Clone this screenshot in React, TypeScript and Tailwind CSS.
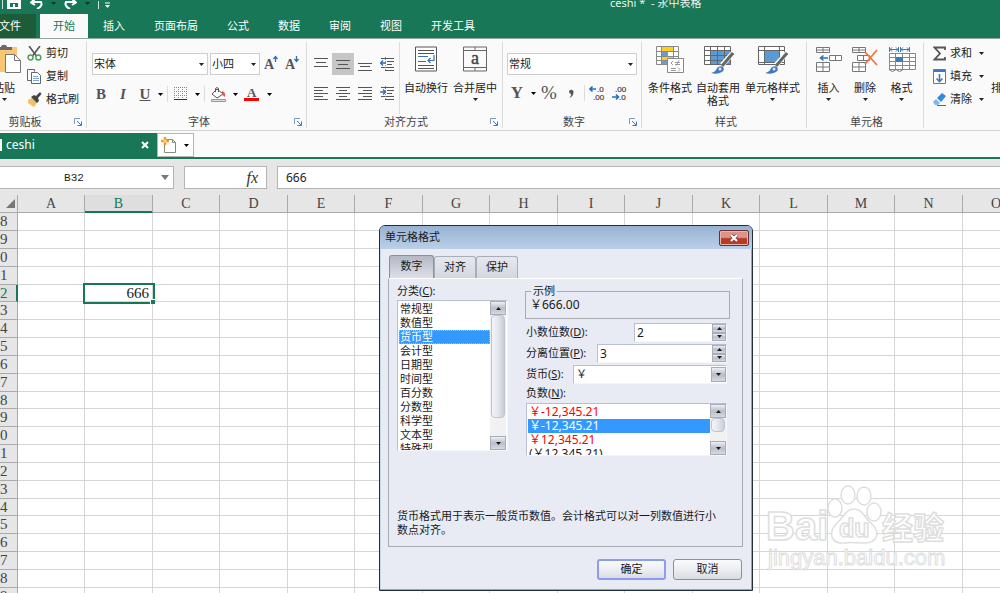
import React from 'react';
import clsx from 'clsx';

const uiFont = 'font-["Noto_Sans","Noto_Sans_CJK_SC",sans-serif]';
const serifFont = 'font-["Liberation_Serif","Noto_Sans_CJK_SC",serif]';

const menuTabs = ['插入', '页面布局', '公式', '数据', '审阅', '视图', '开发工具'];
const columns = ['A', 'B', 'C', 'D', 'E', 'F', 'G', 'H', 'I', 'J', 'K', 'L', 'M', 'N', 'O'];
const rows = Array.from({ length: 22 }, (_, i) => 28 + i);
const categories = [
  '常规型', '数值型', '货币型', '会计型', '日期型', '时间型', '百分数', '分数型', '科学型', '文本型', '特殊型',
];
const negatives = [
  { text: '￥-12,345.21', red: true },
  { text: '￥-12,345.21', red: true },
  { text: '￥12,345.21', red: true },
  { text: '(￥12,345.21)', red: false },
];

interface IconProps {
  w: number;
  h: number;
  children: React.ReactNode;
  className?: string;
}

const Icon: React.FC<IconProps> = ({ w, h, children, className }) => (
  <svg width={w} height={h} viewBox={`0 0 ${w} ${h}`} fill="none" aria-hidden="true" className={clsx('shrink-0', className)}>
    {children}
  </svg>
);

const Caret: React.FC<{ className?: string }> = ({ className }) => (
  <Icon w={5} h={3} className={className}>
    <path d="M0 0h5L2.500 3z" fill="currentColor" />
  </Icon>
);

const UpCaret = () => (
  <Icon w={5} h={3}>
    <path d="M0 3h5L2.500 0z" fill="currentColor" />
  </Icon>
);

/* ---------- ribbon icons ---------- */

const PasteIcon = () => (
  <Icon w={34} h={30}>
    <path d="M2 3h28v25H2z" fill="#f7c873" />
    <path d="M9 5V3h5c0-3 6-3 6 0h5v3H9z" fill="#6b6b6b" />
    <path d="M18.500 10.500h9l6 6v12h-15z" fill="#fff" stroke="#777" />
    <path d="M27.500 10.500v6h6" stroke="#777" />
  </Icon>
);

const CutIcon = () => (
  <Icon w={15} h={15}>
    <path d="M2 0l7.500 10M13 0L5.500 10" stroke="#555" strokeWidth="1.600" />
    <circle cx="3.500" cy="11.500" r="2.500" stroke="#4f9d56" strokeWidth="1.400" />
    <circle cx="11.300" cy="11.500" r="2.500" stroke="#4f9d56" strokeWidth="1.400" />
  </Icon>
);

const CopyIcon = () => (
  <Icon w={15} h={15}>
    <path d="M4 11.500H.500v-11h7v2" stroke="#666" />
    <path d="M4.500 3.500h6l3 3v8h-9z" fill="#fff" stroke="#666" />
    <path d="M6 7.500h5M6 9.500h6M6 11.500h6" stroke="#7aa5d8" />
  </Icon>
);

const BrushIcon = () => (
  <Icon w={15} h={15}>
    <path d="M1 8l4-2 5 5-3 4-6-4z" fill="#f5c062" />
    <path d="M4 5l3-2 2 1 4-4 1.500 2-3.500 4 1 3-2 2z" fill="#444" />
  </Icon>
);

const FontSizeIcon: React.FC<{ up?: boolean }> = ({ up }) => (
  <Icon w={15} h={18}>
    <text x="0" y="14" fontSize="14" fontWeight="bold" fill="#555" fontFamily="Liberation Serif">A</text>
    {up ? (
      <path d="M11.500 7V2M9.500 4l2-2.500 2 2.500" stroke="#2f6fb5" strokeWidth="1.300" />
    ) : (
      <path d="M11.500 1v5M9.500 4l2 2.500 2-2.500" stroke="#2f6fb5" strokeWidth="1.300" />
    )}
  </Icon>
);

const BorderIcon = () => (
  <Icon w={14} h={14}>
    <path d="M.500 0v12M4.500 0v12M8.500 0v12M12.500 0v12M0 .500h13M0 4.500h13M0 8.500h13" stroke="#888" strokeDasharray="1 1" />
    <path d="M0 12.500h13" stroke="#333" />
  </Icon>
);

const FillColorIcon = () => (
  <Icon w={16} h={15}>
    <path d="M6 2l6 5-6 4-5-4z" fill="#fff" stroke="#555" />
    <path d="M4.500 5V1.500q1.500-2 3 0V5" stroke="#555" />
    <path d="M11 4q4 1 3 6-2-1-3-3z" fill="#e05a5a" />
    <path d="M.500 12.500h14v2H.500z" fill="#ddd" stroke="#999" />
  </Icon>
);

const FontColorIcon = () => (
  <Icon w={16} h={16}>
    <text x="3" y="11" fontSize="13" fontWeight="bold" fill="#555" fontFamily="Liberation Serif">A</text>
    <path d="M0 12h15v3H0z" fill="#f00" />
  </Icon>
);

const LinesIcon: React.FC<{ d: string }> = ({ d }) => (
  <Icon w={14} h={14}>
    <path d={d} stroke="#555" />
  </Icon>
);

const IndentIcon: React.FC<{ out?: boolean }> = ({ out }) => (
  <Icon w={15} h={14}>
    <path d="M1 1.500h13M7 4.500h7M7 7.500h5M1 10.500h13M5 13.500h9" stroke="#555" />
    <path d="M5.500 0v14" stroke="#888" strokeDasharray="1 1" />
    <path d={out ? 'M6 6H1M3 3.500L.500 6 3 8.500' : 'M0 6h5M3 3.500L5.500 6 3 8.500'} stroke="#2f6fb5" strokeWidth="1.300" />
  </Icon>
);

const WrapIcon = () => (
  <Icon w={24} h={26}>
    <path d="M1.500 1h21v24h-21z" fill="#fff" stroke="#555" />
    <path d="M4 4.500h16M4 7.500h16M4 19.500h16M4 22.500h16" stroke="#555" />
    <path d="M4 10.500h10M4 15.500h8M20 9v5.500h-6M16.500 12L14 14.500l2.500 2.500" stroke="#3b6fb0" strokeWidth="1.200" />
  </Icon>
);

const MergeIcon = () => (
  <Icon w={26} h={26}>
    <path d="M1.500 1h23v24h-23zM1 4.500h24M1 21.500h24M13 1v3.500M13 21.500V25" stroke="#666" />
    <text x="13" y="18" textAnchor="middle" fontSize="18" fill="#444" stroke="#444" strokeWidth="0.400" fontFamily="Liberation Serif">a</text>
  </Icon>
);

const CondIcon = () => (
  <Icon w={30} h={29}>
    <path d="M1.500 1.500h22v18h-22z" fill="#fff" />
    <path d="M7 2h11v4H7zM7 12h11v4H7z" fill="#ffcf1a" />
    <path d="M7 7h6v4H7zM7 16h5v4H7z" fill="#6b9bd2" />
    <path d="M1.500 1.500h22v18h-22zM1 6.500h22M1 11.500h22M1 15.500h22M6.500 1v19M18.500 1v19" stroke="#888" />
    <path d="M12.500 13.500h16v14h-16z" fill="#fff" stroke="#888" />
    <path d="M18 16l-2 2 2 2M20 17.500h5M20 19.500h5M24 15.500l-3 5M16 23.500h5M16 25.500h5M23 22.500l2 2-2 2" stroke="#999" />
  </Icon>
);

const TableBrush: React.FC<{ single?: boolean }> = ({ single }) => (
  <Icon w={31} h={29}>
    <path d="M1.500 1.500h26v18h-26z" fill="#fff" />
    {single ? (
      <>
        <path d="M8 6h14v11H8z" fill="#5b9bd5" />
        <path d="M1.500 1.500h26v18h-26zM1 5.500h26M7.500 1v19M22.500 1v19M1 17.500h26" stroke="#666" />
      </>
    ) : (
      <>
        <path d="M8 6h20v14H8z" fill="#5b9bd5" />
        <path d="M1.500 1.500h26v18h-26zM1 5.500h26M1 10.500h26M1 15.500h26M7.500 1v19M14.500 1v19M21.500 1v19" stroke="#666" />
      </>
    )}
    <path d="M30 8L19 20" stroke="#fff" strokeWidth="5" />
    <path d="M30 8L19 21" stroke="#666" strokeWidth="3" />
    <path d="M8 28q5-1 6-5 3-3 6-1 2 3-1 5-5 3-11 1z" fill="#3f78bd" />
    <circle cx="17" cy="24" r="1.500" fill="#dce9f7" />
  </Icon>
);

const InsertIcon = () => (
  <Icon w={28} h={27}>
    <path d="M1.500 1.500h13v5h-13zM1 4h13M8 1.500v5M1.500 16.500h13v9h-13zM1 21h13M8 16.500v9" stroke="#777" fill="#fff" />
    <path d="M14.500 9.500h12v5h-12zM20.500 9.500v5" stroke="#777" fill="#fff" />
    <path d="M13 12H6M8.500 9.500L5.500 12l3 2.500" stroke="#2f6fb5" strokeWidth="1.500" />
  </Icon>
);

const DeleteIcon = () => (
  <Icon w={28} h={27}>
    <path d="M1.500 1.500h13v5h-13zM1 4h13M8 1.500v5M1.500 16.500h13v9h-13zM1 21h13M8 16.500v9M6.500 9.500h12v5h-12zM12.500 9.500v5" stroke="#777" fill="#fff" />
    <path d="M14 6l12 13M26 4L14 18" stroke="#f2703f" strokeWidth="1.800" />
  </Icon>
);

const FormatIcon = () => (
  <Icon w={28} h={27}>
    <path d="M1.500 7.500h26v16h-26zM1 11.500h26M1 15.500h26M1 19.500h26M7.500 7.500v16M14.500 7.500v16M21.500 7.500v16" stroke="#888" fill="#fff" />
    <path d="M8 11h7v5H8z" fill="#3f78bd" />
    <path d="M1.500 1v5M10.500 1v5M2 3.500h8M4 1.500l-2 2 2 2M8 1.500l2 2-2 2M12.500 1v5M21.500 1v5M13 3.500h8M15 1.500l-2 2 2 2M19 1.500l2 2-2 2" stroke="#3f78bd" />
    <path d="M1.500 24q3 3 6 0M8.500 24q3 3 6 0" stroke="#777" />
  </Icon>
);

const SumIcon = () => (
  <Icon w={13} h={15}>
    <path d="M12 4V1.500H1.500L7 7.500l-5.500 6H12V11" stroke="#555" strokeWidth="1.800" />
  </Icon>
);

const FillIcon = () => (
  <Icon w={13} h={15}>
    <path d="M.500 .500h12v14H.500z" fill="#fff" stroke="#777" />
    <path d="M1 1h11v2H1z" fill="#3f78bd" />
    <path d="M6.500 5v7M3.500 9.500l3 3 3-3" stroke="#3f78bd" strokeWidth="1.600" />
  </Icon>
);

const EraseIcon = () => (
  <Icon w={13} h={15}>
    <path d="M9 1l4 3-5 6-4-4z" fill="#2f8be0" />
    <path d="M3 7l4 4-2 2H2L0 10z" fill="#7db9f0" />
    <path d="M4 13.500h9" stroke="#666" />
  </Icon>
);

const DecimalIcon: React.FC<{ less?: boolean }> = ({ less }) => (
  <Icon w={16} h={16}>
    <text x={less ? 4 : 8} y="7" fontSize="8" fill="#444" stroke="#444" strokeWidth="0.200" fontFamily="Liberation Sans">{less ? '.00' : '.0'}</text>
    <text x={less ? 8 : 4} y="15" fontSize="8" fill="#444" stroke="#444" strokeWidth="0.200" fontFamily="Liberation Sans">{less ? '.0' : '.00'}</text>
    <path d={less ? 'M1 12h6M5 9.500L7.500 12 5 14.500' : 'M1 4h6M3.500 1.500L1 4l2.500 2.500'} stroke="#1a73c0" strokeWidth="1.600" />
  </Icon>
);

/* ---------- ribbon pieces ---------- */

interface GroupProps {
  label: string;
  launcher?: boolean;
  className: string;
  children: React.ReactNode;
}

const Group: React.FC<GroupProps> = ({ label, launcher, className, children }) => (
  <section aria-label={label} className={clsx('flex shrink-0 flex-col border-r border-[#dcdcdc]', className)}>
    <div className="flex h-[72px]">{children}</div>
    <div className="grid h-[14px] grid-cols-[16px_1fr_16px] items-center text-center text-[#444]">
      <span />
      <span>{label}</span>
      {launcher && (
        <button type="button" aria-label={`${label}设置`} className="pl-1">
          <Icon w={8} h={8}>
            <path d="M.500 6V.500H6" stroke="#7a9cc4" />
            <path d="M3 3l4 4M7.500 3.500v4h-4" stroke="#3f78bd" />
          </Icon>
        </button>
      )}
    </div>
  </section>
);

interface BigButtonProps {
  label: string;
  caret?: boolean;
  className: string;
  children: React.ReactNode;
}

const BigButton: React.FC<BigButtonProps> = ({ label, caret, className, children }) => (
  <button type="button" className={clsx('flex shrink-0 flex-col items-center pt-[2px]', className)}>
    <span className="flex h-[30px] items-center">{children}</span>
    <span className="mt-[7px] leading-[13px]">{label}</span>
    {caret && <Caret className="mt-1" />}
  </button>
);

const SmallButton: React.FC<{ label: string; caret?: boolean; children: React.ReactNode }> = ({ label, caret, children }) => (
  <button type="button" className="flex h-[23px] items-center gap-1">
    {children}
    <span>{label}</span>
    {caret && <Caret className="ml-[3px]" />}
  </button>
);

const Combo: React.FC<{ label: string; value: string; className: string }> = ({ label, value, className }) => (
  <div className={clsx('relative border border-[#cfcfcf] bg-white', className)}>
    <select aria-label={label} className="h-5 w-full appearance-none pl-px text-[11px] leading-5 outline-none">
      <option>{value}</option>
    </select>
    <Caret className="pointer-events-none absolute top-[9px] right-[3px]" />
  </div>
);

const toolButton = 'flex h-[22px] w-[22px] items-center justify-center';

const Ribbon = () => (
  <div className="flex overflow-hidden border-t border-b border-t-[#8fa89b] border-b-[#d2d2d2] bg-[#fafafa] pt-[3px] pb-[2px] text-[11px] text-[#222]">
    <Group label="剪贴板" launcher className="-ml-[36px] w-[123px]">
      <BigButton label="粘贴" caret className="ml-[20px] w-[40px]">
        <PasteIcon />
      </BigButton>
      <div className="ml-[3px] flex flex-col">
        <SmallButton label="剪切"><CutIcon /></SmallButton>
        <SmallButton label="复制"><CopyIcon /></SmallButton>
        <SmallButton label="格式刷"><BrushIcon /></SmallButton>
      </div>
    </Group>

    <Group label="字体" launcher className="w-[220px] pl-[5px]">
      <div className="flex flex-col gap-2 pt-[11px]">
        <div className="flex items-center gap-[2px]">
          <Combo label="字体名称" value="宋体" className="w-[116px]" />
          <Combo label="字号" value="小四" className="w-[50px]" />
          <button type="button" aria-label="增大字号" className="ml-[2px]"><FontSizeIcon up /></button>
          <button type="button" aria-label="减小字号" className="ml-1"><FontSizeIcon /></button>
        </div>
        <div className="flex items-center font-['Liberation_Serif',serif] text-[15px] font-bold text-[#555]">
          <button type="button" className="w-[18px]">B</button>
          <button type="button" className="ml-1 w-[18px] italic">I</button>
          <button type="button" className="ml-1 w-[18px] underline">U</button>
          <Caret className="ml-1 text-black" />
          <span className="ml-1 h-4 border-l border-[#ddd]" />
          <button type="button" aria-label="边框" className="ml-[6px]"><BorderIcon /></button>
          <Caret className="ml-[7px] text-black" />
          <span className="ml-1 h-4 border-l border-[#ddd]" />
          <button type="button" aria-label="填充颜色" className="ml-[6px]"><FillColorIcon /></button>
          <Caret className="ml-[6px] text-black" />
          <button type="button" aria-label="字体颜色" className="ml-[6px]"><FontColorIcon /></button>
          <Caret className="ml-[7px] text-black" />
        </div>
      </div>
    </Group>

    <Group label="对齐方式" launcher className="w-[196px] pl-[3px]">
      <div className="flex w-[90px] flex-wrap content-start gap-y-[7px] border-r border-[#ddd] pt-[11px]">
        <button type="button" aria-label="顶端对齐" className={toolButton}><LinesIcon d="M0 1.500h14M2 5.500h10M0 9.500h14" /></button>
        <button type="button" aria-label="垂直居中" className={clsx(toolButton, 'bg-[#c6c6c6]')}><LinesIcon d="M0 3.500h14M2 7.500h10M0 11.500h14" /></button>
        <button type="button" aria-label="底端对齐" className={toolButton}><LinesIcon d="M0 6.500h14M2 9.500h10M0 13.500h14" /></button>
        <button type="button" aria-label="减少缩进" className={toolButton}><IndentIcon out /></button>
        <button type="button" aria-label="左对齐" className={toolButton}><LinesIcon d="M0 1.500h14M0 4.500h9M0 7.500h14M0 10.500h9M0 13.500h14" /></button>
        <button type="button" aria-label="居中" className={toolButton}><LinesIcon d="M0 1.500h14M3 4.500h8M0 7.500h14M3 10.500h8M0 13.500h14" /></button>
        <button type="button" aria-label="右对齐" className={toolButton}><LinesIcon d="M0 1.500h14M5 4.500h9M0 7.500h14M5 10.500h9M0 13.500h14" /></button>
        <button type="button" aria-label="增加缩进" className={toolButton}><IndentIcon /></button>
      </div>
      <BigButton label="自动换行" className="ml-[2px] w-[48px]"><WrapIcon /></BigButton>
      <BigButton label="合并居中" caret className="w-[50px]"><MergeIcon /></BigButton>
    </Group>

    <Group label="数字" launcher className="w-[139px] pl-1">
      <div className="flex flex-col gap-2 pt-[11px]">
        <Combo label="数字格式" value="常规" className="w-[130px]" />
        <div className="flex items-center text-[#555]">
          <button type="button" className="w-[20px] font-['Liberation_Serif',serif] text-[17px] leading-5 font-bold">Y</button>
          <Caret className="ml-1 text-black" />
          <button type="button" className="ml-1 w-[18px] font-['Liberation_Serif',serif] text-[19px] leading-5">%</button>
          <button type="button" aria-label="千位分隔" className="ml-2">
            <Icon w={10} h={14}>
              <path d="M3 5.500a2.300 2.300 0 1 1 4.500 1Q7.300 10 3.500 12q1.700-2 1.700-4Q3 7.500 3 5.500z" fill="#555" />
            </Icon>
          </button>
          <span className="ml-2 h-4 border-l border-[#ddd]" />
          <button type="button" aria-label="增加小数位" className="ml-1"><DecimalIcon /></button>
          <button type="button" aria-label="减少小数位" className="ml-[6px]"><DecimalIcon less /></button>
        </div>
      </div>
    </Group>

    <Group label="样式" className="w-[165px] pl-1">
      <BigButton label="条件格式" caret className="w-[48px]"><CondIcon /></BigButton>
      <BigButton label="自动套用格式" className="w-[48px]"><TableBrush /></BigButton>
      <BigButton label="单元格样式" caret className="w-[61px]"><TableBrush single /></BigButton>
    </Group>

    <Group label="单元格" className="w-[117px] pl-[3px]">
      <BigButton label="插入" caret className="w-[37px]"><InsertIcon /></BigButton>
      <BigButton label="删除" caret className="w-[36px]"><DeleteIcon /></BigButton>
      <BigButton label="格式" caret className="w-[37px]"><FormatIcon /></BigButton>
    </Group>

    <div className="flex min-w-0 flex-1 overflow-hidden pl-[9px]">
      <div className="flex w-[58px] shrink-0 flex-col">
        <SmallButton label="求和" caret><SumIcon /></SmallButton>
        <SmallButton label="填充" caret><FillIcon /></SmallButton>
        <SmallButton label="清除" caret><EraseIcon /></SmallButton>
      </div>
      <button type="button" aria-label="排序" className="mt-[39px] h-[13px] shrink-0 leading-[13px]">排</button>
    </div>
  </div>
);

const TitleBar = () => (
  <header className="flex h-[14px] items-start overflow-hidden">
    <div className="flex h-[9px] w-[300px] items-end gap-[8px] overflow-hidden pl-[2px]">
      <Icon w={20} h={16}>
        <path d="M.500 0v16" stroke="#cfe3d8" />
        <path d="M5 0h14v16H5z" fill="#fff" />
        <path d="M8 2h8v5H8zM8 10h8v4H8z" fill="#187756" />
        <path d="M11 11h2v5h-2z" fill="#fff" />
      </Icon>
      <Icon w={13} h={16}>
        <path d="M1 9h10q2 4-4 7M5 6L1 9.500 5 12" stroke="#fff" strokeWidth="2" />
      </Icon>
      <Icon w={5} h={8}><path d="M0 1h5L2.500 4z" fill="#10352a" /></Icon>
      <Icon w={13} h={16}>
        <path d="M12 9H2q-2 4 4 7M8 6l4 3.500L8 12" stroke="#fff" strokeWidth="2" />
      </Icon>
      <Icon w={5} h={8}><path d="M0 1h5L2.500 4z" fill="#10352a" /></Icon>
      <Icon w={14} h={8}>
        <path d="M.500 0v8" stroke="#cfe3d8" />
        <path d="M7 4h5L9.500 7z" fill="#fff" />
        <path d="M7 2h5" stroke="#fff" />
      </Icon>
    </div>
    <h1 className="-mt-1 ml-[310px] text-[11px] leading-[14px] whitespace-pre text-[#e8f3ee]">ceshi *  - 永中表格</h1>
  </header>
);

const MenuTabs = () => (
  <nav className="-ml-4 flex h-[24px] gap-px text-[11px] text-white">
    <button type="button" className="w-[52px] bg-[#1d5c38]">文件</button>
    <button type="button" className="ml-[3px] w-[48px] bg-[#fafafa] text-[#187756]">开始</button>
    {menuTabs.map((tab) => (
      <button type="button" key={tab} className="px-[14px]">{tab}</button>
    ))}
  </nav>
);

const DocumentTabs = () => (
  <div className="flex h-[28px] items-stretch border-b-2 border-[#187756] bg-[#fafafa] pt-[2px]">
    <div className="flex w-[157px] items-center bg-[#187756] text-[12px] text-white">
      <span className="h-3 w-[2px] bg-white" />
      <span className="ml-1 flex-1">ceshi</span>
      <button type="button" aria-label="关闭文档" className="mr-2">
        <Icon w={8} h={8}><path d="M1 1l6 6M7 1L1 7" stroke="#fff" strokeWidth="2" /></Icon>
      </button>
    </div>
    <button type="button" aria-label="新建文档" className="flex w-[37px] items-center gap-[7px] border border-[#b5b5b5] bg-white pl-[3px]">
      <Icon w={16} h={16}>
        <path d="M3.500 2.500h8l3 3v10h-11z" fill="#fff" stroke="#888" />
        <path d="M11.500 2.500v3h3" stroke="#888" />
        <path d="M4 0v8M0 4h8" stroke="#f39a1f" strokeWidth="2.500" />
        <path d="M4 2v4M2 4h4" stroke="#ffd98a" />
      </Icon>
      <Caret />
    </button>
  </div>
);

const FormulaBar = () => (
  <div className="flex gap-[10px] bg-[#e6e6e6] pt-[7px] pb-[6px]">
    <div className="relative w-[174px] border border-l-0 border-[#b4b4b4] bg-white">
      <input aria-label="名称框" defaultValue="B32" className="block h-[21px] w-[148px] bg-transparent text-center font-['Liberation_Mono',monospace] text-[11px] text-[#222] outline-none" />
      <Icon w={8} h={5} className="absolute top-2 right-1"><path d="M0 0h8L4 5z" fill="#777" /></Icon>
    </div>
    <button type="button" className="w-[83px] border border-[#b4b4b4] bg-white pr-[8px] text-right font-['Liberation_Serif',serif] text-[16px] leading-[18px] text-[#333] italic">fx</button>
    <input aria-label="编辑栏" defaultValue="666" className="h-[23px] min-w-0 flex-1 border border-r-0 border-[#b4b4b4] bg-white px-2 text-[12px] text-[#222] outline-none" />
  </div>
);

const Sheet = () => (
  <div className={clsx('min-h-0 flex-1 overflow-hidden bg-[#e6e6e6]', serifFont)}>
    <table className="w-max border-separate border-spacing-0 text-[15px] leading-none text-[#444]">
      <thead>
        <tr>
          <th className="h-[18px] w-[18px] min-w-[18px] border-r border-b border-[#aaa] p-0">
            <Icon w={9} h={9} className="ml-[6px]"><path d="M9 0v9H0z" fill="#777" /></Icon>
          </th>
          {columns.map((col, i) => (
            <th
              key={col}
              scope="col"
              className={clsx(
                'border-r border-b p-0 text-[14px] font-normal',
                i % 2 ? 'w-[68px] min-w-[68px]' : 'w-[67px] min-w-[67px]',
                col === 'B' ? 'border-r-[#aaa] border-b-[#187756] bg-[#dedede] text-[#187756] shadow-[inset_0_-1px_0_#187756]' : 'border-[#aaa]',
              )}
            >
              {col}
            </th>
          ))}
        </tr>
      </thead>
      <tbody>
        {rows.map((row, r) => (
          <tr key={row} className={r % 6 === 4 ? 'h-[17px]' : 'h-[18px]'}>
            <th
              scope="row"
              className={clsx(
                'border-r border-b p-0 text-left font-normal',
                row === 32 ? 'border-r-2 border-r-[#187756] border-b-[#aaa] bg-[#dedede] text-[#187756]' : 'border-[#aaa]',
              )}
            >
              {row % 10}
            </th>
            {columns.map((col) =>
              row === 32 && col === 'B' ? (
                <td key={col} className="relative border-r border-b border-[#d6d6d6] bg-white p-0 pr-[3px] text-right text-[#222] outline-2 outline-[#187756]">
                  666
                  <span className="absolute -right-[3px] -bottom-[3px] h-[5px] w-[5px] border-t border-l border-white bg-[#187756]" />
                </td>
              ) : (
                <td key={col} className="border-r border-b border-[#d6d6d6] bg-white p-0" />
              ),
            )}
          </tr>
        ))}
      </tbody>
    </table>
  </div>
);

/* ---------- dialog ---------- */

const metal = 'bg-linear-to-b from-[#eef0f4] via-[#b8bec9] to-[#d5d9e2] border border-[#a9adb8]';
const sunken = 'border border-t-[#b9bfd2] border-l-[#b9bfd2] border-r-[#f5f6fa] border-b-[#f5f6fa] bg-white';

const ScrollBar: React.FC<{ thumb: string }> = ({ thumb }) => (
  <div className="flex w-[16px] shrink-0 flex-col bg-[#f1f1f1]">
    <button type="button" aria-label="向上滚动" className={clsx('flex h-[14px] shrink-0 items-center justify-center', metal)}><UpCaret /></button>
    <div className="min-h-0 flex-1">
      <div className={clsx('mx-px rounded-sm border border-[#bfc4d0] bg-linear-to-r from-[#f4f5f8] via-[#e4e6ec] to-[#c8ccd6]', thumb)} />
    </div>
    <button type="button" aria-label="向下滚动" className={clsx('flex h-[14px] shrink-0 items-center justify-center', metal)}><Caret /></button>
  </div>
);

const Spinner: React.FC<{ id: string; label: string; accel: string; value: string }> = ({ id, label, accel, value }) => (
  <div className="flex h-[21px] items-start">
    <label htmlFor={id} className={clsx('shrink-0 leading-[17px]', id === 'decimals' ? 'w-[108px]' : 'w-[71px]')}>
      {label}(<u>{accel}</u>):
    </label>
    <div className={clsx('flex h-[19px] min-w-0 flex-1', sunken)}>
      <input id={id} defaultValue={value} className="min-w-0 flex-1 pl-[2px] text-[12px] outline-none" />
      <div className="flex w-[14px] flex-col">
        <button type="button" aria-label={`${label}增加`} className={clsx('flex flex-1 items-center justify-center', metal)}><UpCaret /></button>
        <button type="button" aria-label={`${label}减少`} className={clsx('flex flex-1 items-center justify-center', metal)}><Caret /></button>
      </div>
    </div>
  </div>
);

const dialogTab = 'h-[22px] rounded-t-[3px] border border-b-0 border-[#a9adb8] bg-linear-to-b from-[#e6e8ee] to-[#d3d7e0]';
const dialogButton = 'h-[21px] w-[69px] rounded-[3px] bg-linear-to-b from-[#fafafc] via-[#eceef2] to-[#d9dce3]';

const FormatDialog = () => (
  <div
    role="dialog"
    aria-labelledby="dialog-title"
    className="absolute top-[225px] left-[379px] flex h-[366px] w-[374px] flex-col rounded-t-md border border-[#20303a] bg-[#e8eaf4] text-[11px] text-[#1a1a1a] shadow-[inset_-1px_-1px_0_#4fc3dc,inset_1px_0_0_#c4d6ea]"
  >
    <div className="flex h-[23px] shrink-0 items-center justify-between rounded-t-[5px] bg-linear-to-b from-[#97b2d1] to-[#bad0e9] pr-[3px] pl-[5px]">
      <h2 id="dialog-title">单元格格式</h2>
      <button type="button" aria-label="关闭" className="flex h-4 w-[30px] items-center justify-center rounded-[2px] border border-[#6b2d2d] bg-linear-to-b from-[#dd9488] from-45% to-[#b93a25] to-55% shadow-[inset_0_0_0_1px_#e8b5ab]">
        <Icon w={10} h={8}>
          <path d="M2 1l6 6M8 1L2 7" stroke="#6b4a4a" strokeWidth="3.500" />
          <path d="M2 1l6 6M8 1L2 7" stroke="#fff" strokeWidth="2" />
        </Icon>
      </button>
    </div>

    <div role="tablist" className="mt-[6px] ml-[9px] flex shrink-0 items-end">
      <button type="button" role="tab" aria-selected="true" className="h-[23px] w-[45px] rounded-t-[3px] border border-b-0 border-[#8a8f9c] bg-linear-to-b from-[#b4b8c4] to-[#dde0e8] pb-[2px]">数字</button>
      <button type="button" role="tab" aria-selected="false" className={clsx(dialogTab, 'w-[42px]')}>对齐</button>
      <button type="button" role="tab" aria-selected="false" className={clsx(dialogTab, 'w-[42px]')}>保护</button>
    </div>

    <div role="tabpanel" className="mr-[9px] ml-2 flex h-[269px] shrink-0 flex-col justify-between border border-[#a9abb2] border-t-white pt-1 pr-3 pb-[9px] pl-2">
      <div className="flex justify-between">
        <div className="w-[111px]">
          <span id="category-label" className="block leading-[16px]">分类(<u>C</u>):</span>
          <div className={clsx('mt-[1px] flex h-[151px] overflow-hidden pr-px', sunken)}>
            <ul role="listbox" aria-labelledby="category-label" className="min-w-0 flex-1 overflow-hidden pt-px pl-px leading-[14px]">
              {categories.map((item) => (
                <li
                  key={item}
                  role="option"
                  aria-selected={item === '货币型'}
                  className={clsx('h-[14px] pl-px', item === '货币型' && 'bg-[#3399ff] text-white outline-1 -outline-offset-1 outline-[#8fc4f5] outline-dotted')}
                >
                  {item}
                </li>
              ))}
            </ul>
            <ScrollBar thumb="h-[103px]" />
          </div>
        </div>

        <div className="w-[205px]">
          <fieldset className="mt-[2px] h-[34px] w-full border border-[#a9abb2] pl-[3px]">
            <legend className="ml-[2px] h-3 px-[2px] leading-3">示例</legend>
            <output className="block pl-px text-[12px] leading-[16px]">￥666.00</output>
          </fieldset>
          <div className="mt-1 pr-[3px] pl-px">
            <Spinner id="decimals" label="小数位数" accel="D" value="2" />
            <Spinner id="separator" label="分离位置" accel="P" value="3" />
            <div className="flex h-5 items-start">
              <label htmlFor="currency" className="w-[47px] shrink-0 leading-[17px]">货币(<u>S</u>):</label>
              <div className={clsx('relative h-[19px] min-w-0 flex-1', sunken)}>
                <select id="currency" aria-label="货币" className="block h-[17px] w-full appearance-none pl-[2px] outline-none">
                  <option>￥</option>
                </select>
                <span className={clsx('pointer-events-none absolute top-px right-0 flex h-[15px] w-[15px] items-center justify-center', metal)}><Caret /></span>
              </div>
            </div>
            <span id="negative-label" className="block leading-[16px]">负数(<u>N</u>):</span>
            <div className={clsx('mt-[2px] flex h-[53px] overflow-hidden', sunken)}>
              <ul role="listbox" aria-labelledby="negative-label" className="min-w-0 flex-1 overflow-hidden pt-px pl-px text-[12px] leading-[14px]">
                {negatives.map((item, i) => (
                  <li
                    key={i}
                    role="option"
                    aria-selected={i === 1}
                    className={clsx('h-[14px] pl-px', i === 1 ? 'bg-[#3399ff] text-white' : item.red && 'text-[#f00]')}
                  >
                    {item.text}
                  </li>
                ))}
              </ul>
              <ScrollBar thumb="h-[14px]" />
            </div>
          </div>
        </div>
      </div>
      <p className="leading-[14px]">货币格式用于表示一般货币数值。会计格式可以对一列数值进行小<br />数点对齐。</p>
    </div>

    <div className="mt-3 flex justify-end gap-[7px] pr-[10px]">
      <button type="button" className={clsx(dialogButton, 'border-2 border-[#8d9cf0]')}>确定</button>
      <button type="button" className={clsx(dialogButton, 'border border-[#8f8f96]')}>取消</button>
    </div>
  </div>
);

const Watermark = () => (
  <svg viewBox="0 0 184 92" width="184" height="92" aria-hidden="true" className="pointer-events-none absolute top-[482px] left-[764px]">
    <g fill="#fff" stroke="#dedede" strokeWidth="1.500" fontFamily="Liberation Sans, Noto Sans CJK SC" fontWeight="bold">
      <text x="2" y="58" fontSize="40">Bai</text>
      <ellipse cx="71" cy="26" rx="7" ry="9" />
      <ellipse cx="84" cy="13" rx="7" ry="9" />
      <ellipse cx="100" cy="14" rx="7" ry="9" />
      <ellipse cx="110" cy="30" rx="7" ry="9" />
      <path d="M90 27c8 0 10 8 17 14 11 10 5 20-6 20-6 0-16-1-22 0-11 1-16-10-6-20 7-6 9-14 17-14z" />
      <text x="75" y="55" fontSize="25">du</text>
      <text x="118" y="57" fontSize="31" fontFamily="Noto Sans CJK SC">经验</text>
      <text x="4" y="83" fontSize="22" strokeWidth="1" fontWeight="normal">jingyan.baidu.com</text>
    </g>
  </svg>
);

const App: React.FC = () => {
  return (
    <div className={clsx('relative flex h-screen flex-col overflow-hidden bg-[#187756]', uiFont)}>
      <TitleBar />
      <MenuTabs />
      <Ribbon />
      <DocumentTabs />
      <FormulaBar />
      <Sheet />
      <Watermark />
      <FormatDialog />
    </div>
  );
};

export default App;
